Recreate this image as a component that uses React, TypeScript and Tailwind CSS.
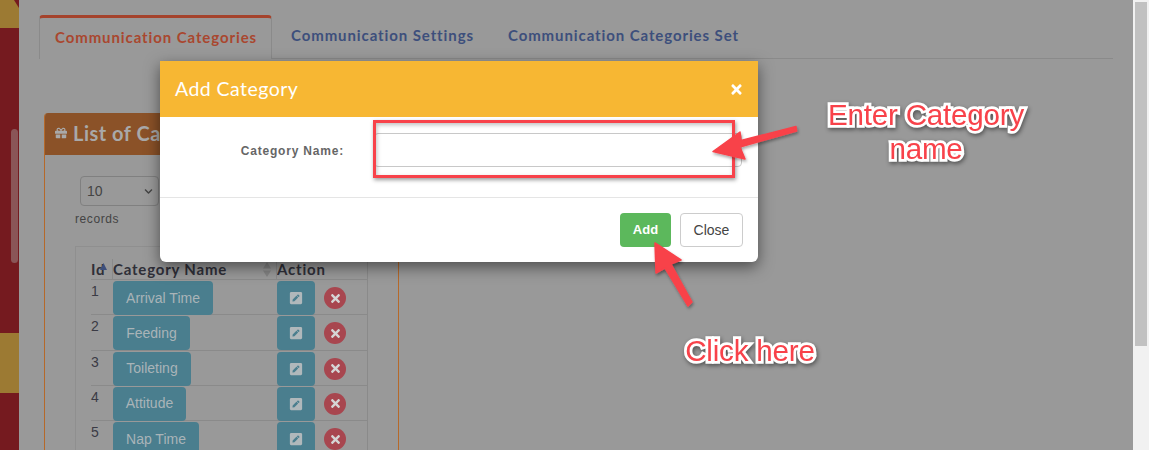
import { FaGift, FaPenSquare, FaTimes, FaChevronDown } from "react-icons/fa";

const rows = [
  { id: 1, name: "Arrival Time", w: "w-[100px]" },
  { id: 2, name: "Feeding", w: "w-[77px]" },
  { id: 3, name: "Toileting", w: "w-[78px]" },
  { id: 4, name: "Attitude", w: "w-[73px]" },
  { id: 5, name: "Nap Time", w: "w-[86px]" },
];

const noteClass =
  "absolute text-center font-['Liberation_Sans',Arial,sans-serif] text-[29.6px] leading-[34px] tracking-[-0.2px] text-[#f8424a] [-webkit-text-stroke:5.5px_white] [paint-order:stroke_fill] [filter:drop-shadow(1px_2px_2px_rgba(0,0,0,0.45))]";

function Row({ id, name, w }: { id: number; name: string; w: string }) {
  return (
    <div className="grid h-[35.25px] grid-cols-[22px_164px_91px] border-b border-r border-[#8a8a8a] text-[14px] text-[#3b3b45]">
      <div className="pt-px leading-[20px]">{id}</div>
      <div className="pt-px">
        <div className={`flex h-[34px] items-center justify-center rounded-[4px] bg-[#4a7e8e] text-[14px] text-[#a9b4b8] ${w}`}>{name}</div>
      </div>
      <div className="flex items-start pt-px">
        <div className="flex h-[34px] w-[38px] items-center justify-center rounded-[4px] bg-[#4a7e8e] text-[#b0b8bb]">
          <FaPenSquare size={14} />
        </div>
        <div className="ml-[9px] mt-[6px] flex h-[22px] w-[22px] items-center justify-center rounded-full bg-[#a8464f] text-[#d5d5d5]">
          <FaTimes size={13} />
        </div>
      </div>
    </div>
  );
}

export default function App() {
  return (
    <div className="relative flex h-[450px] w-[1149px] overflow-hidden bg-[#999999] font-['Liberation_Sans',Arial,sans-serif]">
      {/* sidebar */}
      <div className="relative flex h-full w-[19px] shrink-0 flex-col bg-[#751a1f]">
        <div className="h-[28px] bg-[#9c7a33] [clip-path:polygon(0_0,14px_0,19px_8px,19px_100%,0_100%)]" />
        <div className="h-[305px]" />
        <div className="h-[60px] bg-[#9c7a33]" />
        <div className="absolute left-[11px] top-[129px] h-[134px] w-[7px] rounded-[4px] bg-[#8a5557]" />
      </div>

      {/* page */}
      <div className="min-w-0 flex-1 pl-[20px] pt-[15px]">
        <div className="flex h-[44px] w-[1074px] border-b border-[#8a8a8a] font-['Lato',sans-serif] text-[15px] font-bold tracking-[0.9px]">
          <div className="relative h-[44px] w-[233px] rounded-t-[4px] border-x border-t-[3px] border-x-[#8a8a8a] border-t-[#a5432c] bg-[#999999] pl-[15px] pt-[8px] text-[#a9472f]">
            Communication Categories
          </div>
          <div className="pl-[19px] pt-[9px] text-[#3d4f7c]">Communication Settings</div>
          <div className="pl-[34px] pt-[9px] text-[#3d4f7c]">Communication Categories Set</div>
        </div>

        <div className="ml-[5px] mt-[54px] h-[340px] w-[355px] overflow-hidden rounded-t-[4px] border-x border-[#b5692a]">
          <div className="-mx-px flex h-[42px] items-center gap-[6px] bg-[#8b5228] pb-[2px] pl-[11px] font-['Lato',sans-serif] text-[20px] font-bold tracking-[0.5px] text-[#a9a9a9]">
            <FaGift size={12} />
            <span>List of Categories</span>
          </div>
          <div className="pl-[30px] pt-[21px]">
            <div className="ml-[5px] flex h-[30px] w-[79px] items-center justify-between rounded-[4px] border border-[#808080] pl-[6px] pr-[5px] text-[14px] text-[#444]">
              <span>10</span>
              <FaChevronDown size={9} />
            </div>
            <div className="mt-[5px] text-[12px] leading-[16px] tracking-[0.6px] text-[#444]">records</div>
            <div className="mt-[19px] h-[300px] border-l border-t border-[#8f8f8f] pl-[15px] pt-[12px]">
              <div className="grid h-[21px] w-[277px] grid-cols-[22px_164px_91px] border-b border-r border-[#8a8a8a] font-['Lato',sans-serif] text-[15px] font-bold leading-[20px] tracking-[0.8px] text-[#2f2f38]">
                <div className="relative border-r border-[#8a8a8a]">
                  Id
                  <svg className="absolute left-[9px] top-[4px]" width="7" height="7" viewBox="0 0 7 7">
                    <path d="M3.5 0 L7 7 L0 7 Z" fill="#3d4f7c" />
                  </svg>
                </div>
                <div className="relative border-r border-[#8a8a8a]">
                  Category Name
                  <svg className="absolute left-[150px] top-[3px]" width="8" height="15" viewBox="0 0 8 15">
                    <path d="M4 0 L8 6.5 L0 6.5 Z M4 15 L8 8.5 L0 8.5 Z" fill="#858585" />
                  </svg>
                </div>
                <div>Action</div>
              </div>
              <div className="w-[277px]">
                {rows.map((r) => (
                  <Row key={r.id} {...r} />
                ))}
              </div>
            </div>
          </div>
        </div>
      </div>

      {/* window scrollbar */}
      <div className="h-full w-[16px] shrink-0 bg-[#f1f1f1] px-[2px] pt-[2px]">
        <div className="h-[344px] bg-[#c1c1c1]" />
      </div>

      {/* modal */}
      <div className="absolute left-[160px] top-[61px] w-[598px] overflow-hidden rounded-b-[6px] bg-white shadow-[0_5px_15px_rgba(0,0,0,0.5)]">
        <div className="flex h-[56px] items-center justify-between bg-[#f7b733] pl-[15px] pr-[14px] font-['Lato',sans-serif] text-white">
          <span className="text-[19.5px] tracking-[0.45px]">Add Category</span>
          <FaTimes size={15} />
        </div>
        <div className="relative flex h-[81px] items-start border-b border-[#e5e5e5] pt-[16px]">
          <label className="w-[184px] pt-[10px] text-right text-[12px] font-bold leading-[16px] tracking-[0.8px] text-[#666]">Category Name:</label>
          <div className="ml-[30px] h-[34px] w-[368px] rounded-[4px] border border-[#c8c8c8]" />
          <div className="absolute left-[213px] top-[3px] h-[58px] w-[362px] border-[3px] border-[#f8424a] shadow-[1px_2px_4px_rgba(0,0,0,0.4),inset_1px_2px_4px_rgba(0,0,0,0.25)]" />
        </div>
        <div className="flex h-[64px] items-start justify-end gap-[9px] pr-[15px] pt-[15px]">
          <button className="h-[34px] w-[51px] rounded-[4px] bg-[#5cb85c] text-[13px] font-bold text-white">Add</button>
          <button className="h-[34px] w-[63px] rounded-[4px] border border-[#cccccc] bg-white text-[14px] text-[#444]">Close</button>
        </div>
      </div>

      {/* annotations */}
      <svg className="absolute left-0 top-0" width="1149" height="450" viewBox="0 0 1149 450" fill="none">
        <defs>
          <filter id="s" x="-20%" y="-20%" width="140%" height="140%">
            <feDropShadow dx="1" dy="2" stdDeviation="1.5" floodColor="#000" floodOpacity="0.35" />
          </filter>
        </defs>
        <g filter="url(#s)">
          <path d="M796 126.5 L796.6 131 L740 147 L745 159 L713 151.5 L740 132 L741 140.5 Z" fill="#f8424a" stroke="#f8424a" strokeWidth="1.5" strokeLinejoin="round" />
          <path d="M655 243 L681 260 L671 264 L692 302 L688 306 L665 268 L656 273 Z" fill="#f8424a" stroke="#f8424a" strokeWidth="1.5" strokeLinejoin="round" />
        </g>
      </svg>
      <div className={`${noteClass} left-[822px] top-[98px] w-[208px]`}>Enter Category<br />name</div>
      <div className={`${noteClass} left-[670px] top-[334px] w-[160px]`}>Click here</div>
    </div>
  );
}
